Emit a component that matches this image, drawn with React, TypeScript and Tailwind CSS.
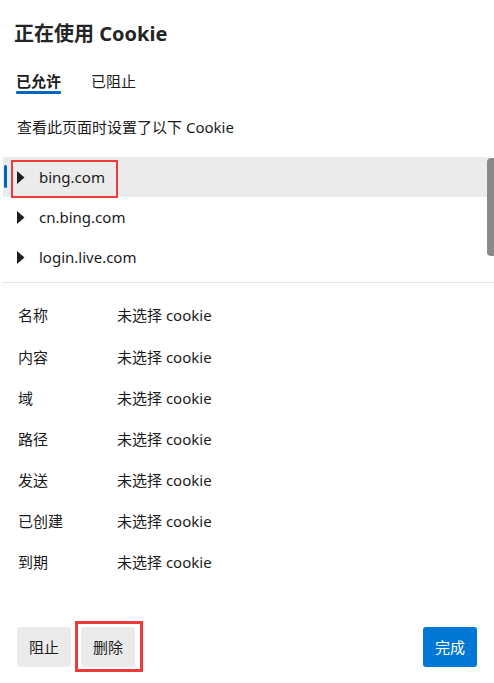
import React from "react";

const font = { fontFamily: '"Noto Sans", "Noto Sans CJK SC", sans-serif' };

function Tri() {
  return (
    <svg width="8" height="13" viewBox="0 0 8 13" className="shrink-0">
      <path d="M0 0 L7.5 6.5 L0 13 Z" fill="#1f1f1f" />
    </svg>
  );
}

const details = ["名称", "内容", "域", "路径", "发送", "已创建", "到期"];

export default function App() {
  return (
    <div className="w-[494px] h-[683px] bg-white text-[#1b1b1b] flex flex-col overflow-hidden" style={font}>
      <div className="pt-[22px] pl-[14px] text-[20px] leading-[24px] font-bold text-[#242424]">正在使用 Cookie</div>
      <div className="mt-[26px] pl-[16px] flex gap-[30px] text-[15px]">
        <div className="flex flex-col">
          <span className="leading-[19px] font-semibold">已允许</span>
          <span className="h-[3px] bg-[#0067c0] rounded-[1px]" />
        </div>
        <div className="flex flex-col">
          <span className="leading-[19px]">已阻止</span>
        </div>
      </div>
      <div className="mt-[23px] pl-[17px] text-[15px] leading-[20px]">查看此页面时设置了以下 Cookie</div>
      <div className="mt-[20px] relative h-[126px] border-b border-[#e5e5e5] ml-[2px]">
        <div className="flex flex-col pl-[1px] pr-[7px]">
          <div className="relative h-[40px] bg-[#ebebeb] flex items-center pl-[14px] gap-[14px] text-[15px]">
            <span className="absolute left-[1px] top-[8px] w-[3px] h-[23px] rounded-full bg-[#0067c0]" />
            <Tri />
            <span>bing.com</span>
            <span className="absolute left-[8px] top-[3px] w-[107px] h-[38px] border-2 border-[#f03a3a]" />
          </div>
          <div className="h-[40px] flex items-center pl-[14px] gap-[14px] text-[15px]">
            <Tri />
            <span>cn.bing.com</span>
          </div>
          <div className="h-[40px] flex items-center pl-[14px] gap-[14px] text-[15px]">
            <Tri />
            <span>login.live.com</span>
          </div>
        </div>
        <div className="absolute right-0 top-[1px] w-[7px] h-[98px] rounded-l-[4px] bg-[#8a8a8a]" />
      </div>
      <div className="mt-[12px] flex flex-col text-[15px]">
        {details.map((d) => (
          <div key={d} className="h-[41.2px] flex items-center">
            <span className="w-[117px] pl-[18px]">{d}</span>
            <span>未选择 cookie</span>
          </div>
        ))}
      </div>
      <div className="mt-auto mb-[16px] px-[17px] flex items-center text-[15px]">
        <button className="w-[54px] h-[40px] rounded-[3px] bg-[#ebebeb]">阻止</button>
        <div className="relative ml-[10px]">
          <button className="w-[54px] h-[40px] rounded-[3px] bg-[#ebebeb]">删除</button>
          <span className="absolute -left-[6px] -top-[6px] w-[68px] h-[51px] border-[3px] border-[#f03a3a]" />
        </div>
        <button className="ml-auto w-[54px] h-[40px] rounded-[3px] bg-[#0078d4] text-white">完成</button>
      </div>
    </div>
  );
}
